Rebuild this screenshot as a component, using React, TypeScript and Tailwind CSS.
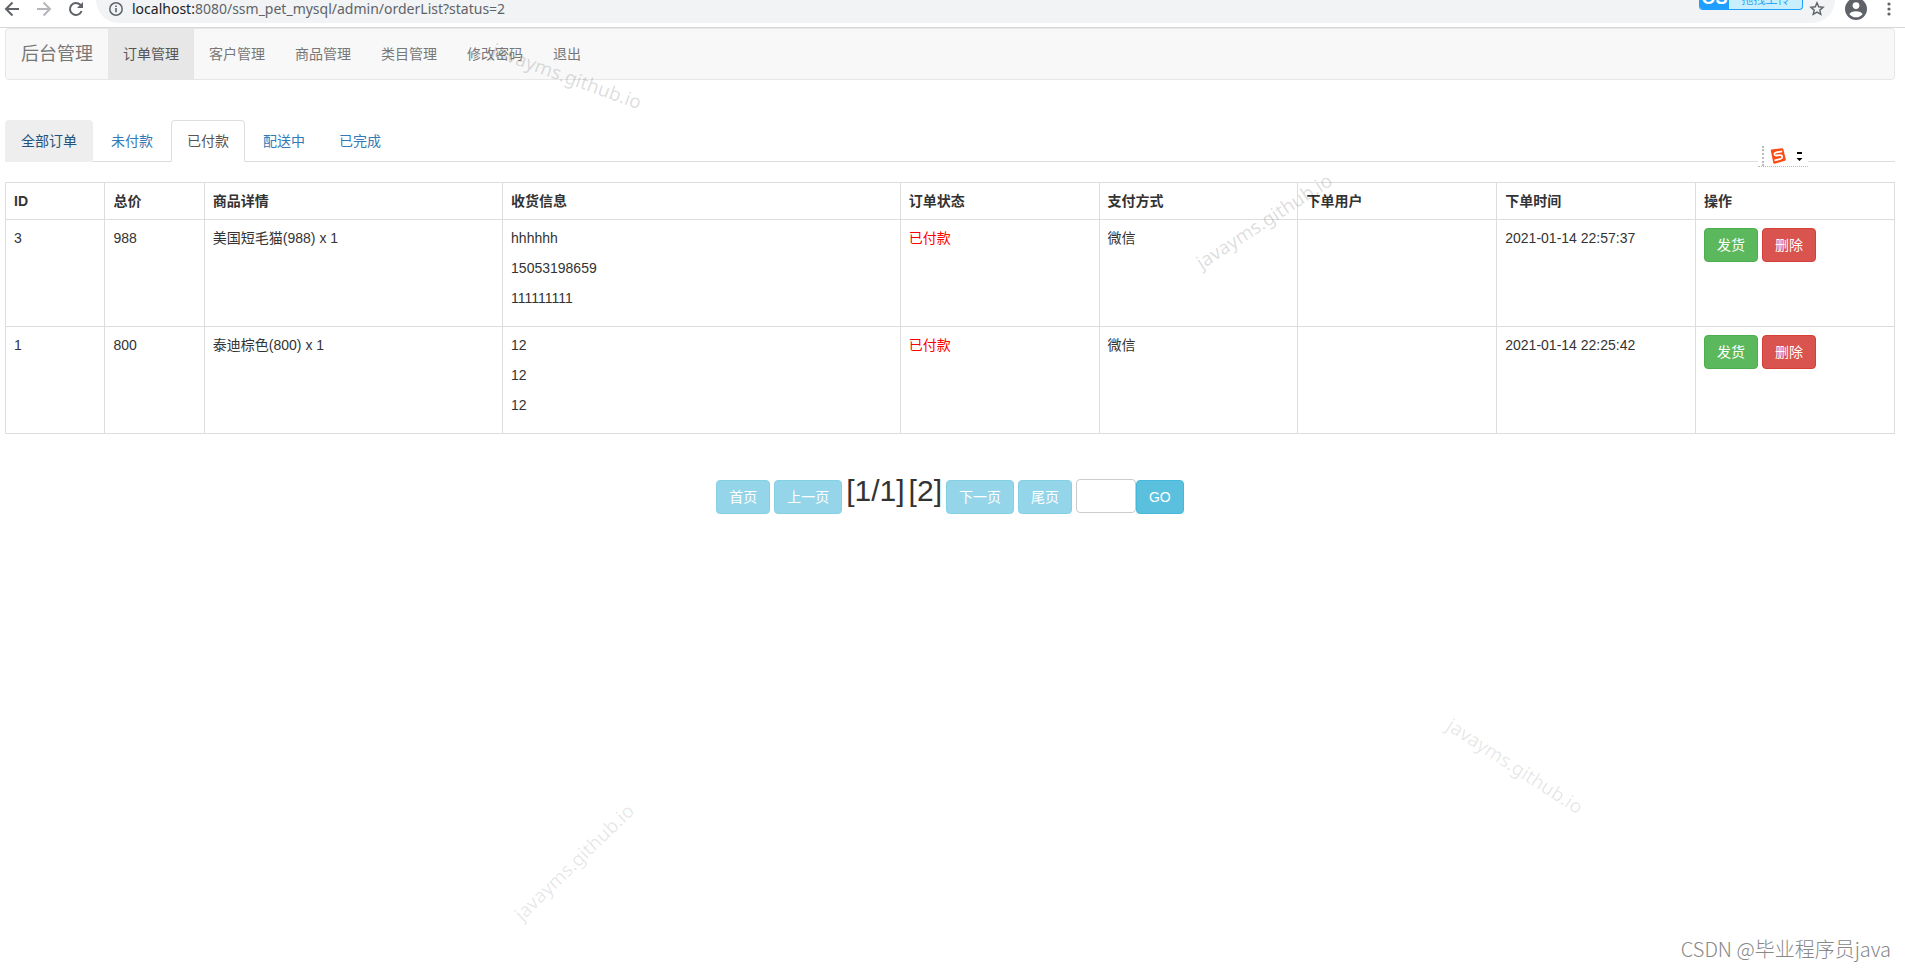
import React from "react";

const FONT = "font-['Liberation_Sans','Noto_Sans_CJK_SC',sans-serif]";

const navItems = ["订单管理", "客户管理", "商品管理", "类目管理", "修改密码", "退出"];
const tabs = ["全部订单", "未付款", "已付款", "配送中", "已完成"];

const columns = [
  { label: "ID", width: "w-1/19" },
  { label: "总价", width: "w-1/19" },
  { label: "商品详情", width: "w-3/19" },
  { label: "收货信息", width: "w-4/19" },
  { label: "订单状态", width: "w-2/19" },
  { label: "支付方式", width: "w-2/19" },
  { label: "下单用户", width: "w-2/19" },
  { label: "下单时间", width: "w-2/19" },
  { label: "操作", width: "w-2/19" },
];

const orders = [
  {
    id: 3,
    total: 988,
    detail: "美国短毛猫(988) x 1",
    receiver: ["hhhhhh", "15053198659", "111111111"],
    time: "2021-01-14 22:57:37",
  },
  {
    id: 1,
    total: 800,
    detail: "泰迪棕色(800) x 1",
    receiver: ["12", "12", "12"],
    time: "2021-01-14 22:25:42",
  },
];

function BrowserBar() {
  return (
    <div className="relative flex h-7 items-start border-b border-[#d5d7d9] bg-white text-[#5f6368]">
      <button aria-label="后退" className="mt-px ml-1">
        <svg viewBox="0 0 16 16" className="size-4" fill="none" stroke="currentColor" strokeWidth="2">
          <path d="M15 8H2.5M8.5 1.5 2 8l6.5 6.5" />
        </svg>
      </button>
      <button aria-label="前进" className="mt-px ml-4 text-[#b4b6b9]">
        <svg viewBox="0 0 16 16" className="size-4" fill="none" stroke="currentColor" strokeWidth="2">
          <path d="M1 8h12.5M7.5 1.5 14 8l-6.5 6.5" />
        </svg>
      </button>
      <button aria-label="刷新" className="mt-px ml-4">
        <svg viewBox="0 0 16 16" className="size-4" fill="none" stroke="currentColor" strokeWidth="2">
          <path d="M13.6 10a6 6 0 1 1-1.3-6.2L14 5.5" />
          <path d="M15 1v6H9z" fill="currentColor" stroke="none" />
        </svg>
      </button>
      <div className="ml-3 flex h-[23px] flex-1 items-start rounded-b-full bg-[#f1f3f4] pl-3">
        <svg viewBox="0 0 16 16" className="mt-px size-4" fill="none" stroke="currentColor">
          <circle cx="8" cy="8" r="6.2" strokeWidth="1.5" />
          <path d="M8 7v4.2M8 4.4V6" strokeWidth="1.6" />
        </svg>
        <span className="ml-2 font-['Noto_Sans',sans-serif] text-sm leading-[18px]">
          <span className="text-[#202124]">localhost:</span>8080/ssm_pet_mysql/admin/orderList?status=2
        </span>
        <span className="ml-auto flex h-[10px] w-26 overflow-hidden rounded-b border border-t-0 border-[#1e9fff] bg-[#c9effd] text-[#2ba5f7]">
          <span className="flex w-[29px] items-start justify-center bg-[#1e9fff] text-lg leading-4 font-bold text-white">
            <span className="-mt-2.5">OS</span>
          </span>
          <span className="flex flex-1 items-start justify-center text-xs leading-3">
            <span className="-mt-1.5">拖拽上传</span>
          </span>
        </span>
        <svg viewBox="0 0 16 16" className="mt-px mr-2.5 ml-1.5 size-4" fill="none" stroke="currentColor" strokeWidth="1.4">
          <path d="m8 1.8 1.7 4 4.4.4-3.3 2.9 1 4.3L8 11.1l-3.8 2.3 1-4.3-3.3-2.9 4.4-.4z" />
        </svg>
      </div>
      <button aria-label="用户" className="ml-2.5">
        <svg viewBox="0 0 22 22" className="-mt-0.5 size-[22px]">
          <circle cx="11" cy="11" r="11" fill="#5f6368" />
          <circle cx="11" cy="7.6" r="3.4" fill="#fff" />
          <path d="M4.4 16.2c1-4 12.2-4 13.2 0a8.5 8.5 0 0 1-13.2 0z" fill="#fff" />
        </svg>
      </button>
      <button aria-label="菜单" className="mt-px mr-2 ml-3.5">
        <svg viewBox="0 0 16 16" className="size-4" fill="currentColor">
          <circle cx="8" cy="3" r="1.6" />
          <circle cx="8" cy="8" r="1.6" />
          <circle cx="8" cy="13" r="1.6" />
        </svg>
      </button>
    </div>
  );
}

function Navbar() {
  return (
    <nav className="flex h-[52px] items-stretch overflow-hidden rounded border border-[#e7e7e7] bg-[#f8f8f8] text-sm text-[#777]">
      <a href="#" className="flex items-center px-[15px] text-lg">后台管理</a>
      {navItems.map((item, i) => (
        <a
          key={item}
          href="#"
          className={i === 0 ? "flex items-center bg-[#e7e7e7] px-[15px] text-[#555]" : "flex items-center px-[15px]"}
        >
          {item}
        </a>
      ))}
    </nav>
  );
}

function tabStyle(i: number) {
  if (i === 0) return "border-transparent bg-[#eee] text-[#23527c]";
  if (i === 2) return "border-[#ddd] border-b-white bg-white text-[#555]";
  return "border-transparent text-[#337ab7]";
}

function Tabs() {
  return (
    <ul className="mt-10 flex border-b border-[#ddd] text-sm leading-5">
      {tabs.map((tab, i) => (
        <li key={tab} className="mr-0.5 -mb-px">
          <a href="#" className={`block rounded-t border px-[15px] py-2.5 ${tabStyle(i)}`}>{tab}</a>
        </li>
      ))}
    </ul>
  );
}

function OrderTable() {
  const cell = "border border-[#ddd] p-2 text-left align-top";
  return (
    <table className="mt-5 w-full table-fixed border-collapse text-sm leading-5">
      <thead>
        <tr>
          {columns.map((c) => (
            <th key={c.label} className={`${cell} ${c.width} font-bold`}>{c.label}</th>
          ))}
        </tr>
      </thead>
      <tbody>
        {orders.map((o) => (
          <tr key={o.id}>
            <td className={cell}>{o.id}</td>
            <td className={cell}>{o.total}</td>
            <td className={cell}>{o.detail}</td>
            <td className={cell}>
              {o.receiver.map((line, i) => (
                <p key={i} className="mb-2.5">{line}</p>
              ))}
            </td>
            <td className={`${cell} text-[#f00]`}>已付款</td>
            <td className={cell}>微信</td>
            <td className={cell} />
            <td className={cell}>{o.time}</td>
            <td className={cell}>
              <div className="flex gap-1">
                <button className="rounded border border-[#4cae4c] bg-[#5cb85c] px-3 py-1.5 text-white">发货</button>
                <button className="rounded border border-[#d43f3a] bg-[#d9534f] px-3 py-1.5 text-white">删除</button>
              </div>
            </td>
          </tr>
        ))}
      </tbody>
    </table>
  );
}

function Pagination() {
  const btn = "rounded border border-[#46b8da] bg-[#5bc0de] px-3 py-1.5 text-sm leading-5 text-white";
  return (
    <div className="mt-10 flex items-end justify-center gap-1">
      <button disabled className={`${btn} opacity-65`}>首页</button>
      <button disabled className={`${btn} opacity-65`}>上一页</button>
      <h2 className="mb-[7px] flex gap-1 text-3xl leading-[33px]">
        <span>[1/1]</span>
        <span>[2]</span>
      </h2>
      <button disabled className={`${btn} opacity-65`}>下一页</button>
      <button disabled className={`${btn} opacity-65`}>尾页</button>
      <div className="flex items-end">
        <input
          aria-label="页码"
          className="mb-px h-[34px] w-[60px] rounded border border-[#ccc] bg-white px-3 text-sm"
        />
        <button className={btn}>GO</button>
      </div>
    </div>
  );
}

function InputMethodBar() {
  return (
    <div className="absolute top-[145px] right-[97px] flex h-[22px] w-[50px] items-center border-b border-dotted border-[#bbb] bg-white">
      <span className="ml-1 h-5 border-l-2 border-dotted border-[#bbb]" />
      <svg viewBox="0 0 16 16" className="ml-1.5 size-4">
        <path d="M.8 2.6Q.6 1.6 1.6 1.4L12 .2q1-.1 1.3.9L15.8 11.5q.2 1-.8 1.3L4.5 15.8q-1 .2-1.200-.8z" fill="#fb4b12" />
        <path d="M12.2 3.4 6.2 4.4c-2.7.6-2.2 3.3.2 3.1l3.5-.4c2.9-.1 3 3.2.4 3.9l-5.8 1.3" fill="none" stroke="#fff" strokeWidth="1.8" />
      </svg>
      <svg viewBox="0 0 8 12" className="ml-2.5 h-3 w-2">
        <path d="M1 2h5v2H1zM.5 8h6l-3 3z" fill="#000" />
      </svg>
    </div>
  );
}

const markStyle =
  "pointer-events-none absolute font-['Noto_Sans',sans-serif] text-[19px] leading-6 whitespace-nowrap -translate-x-1/2 -translate-y-1/2";

export default function App() {
  return (
    <div className={`relative min-h-screen overflow-hidden bg-white text-[#333] ${FONT}`}>
      <BrowserBar />
      <main className="pr-2.5 pl-[5px]">
        <Navbar />
        <Tabs />
        <OrderTable />
        <Pagination />
      </main>
      <InputMethodBar />
      <span className={`${markStyle} top-[76px] left-[567px] rotate-[20deg] text-black/15`}>javayms.github.io</span>
      <span className={`${markStyle} top-[221px] left-[1264px] rotate-[-33deg] text-black/15`}>javayms.github.io</span>
      <span className={`${markStyle} top-[862px] left-[574px] rotate-[-44deg] text-black/10`}>javayms.github.io</span>
      <span className={`${markStyle} top-[766px] left-[1515px] rotate-[33deg] text-black/10`}>javayms.github.io</span>
      <span className="absolute right-3.5 bottom-2 font-['Noto_Sans_CJK_SC',sans-serif] text-xl leading-6 font-light text-[#888]">
        CSDN @毕业程序员java
      </span>
    </div>
  );
}
